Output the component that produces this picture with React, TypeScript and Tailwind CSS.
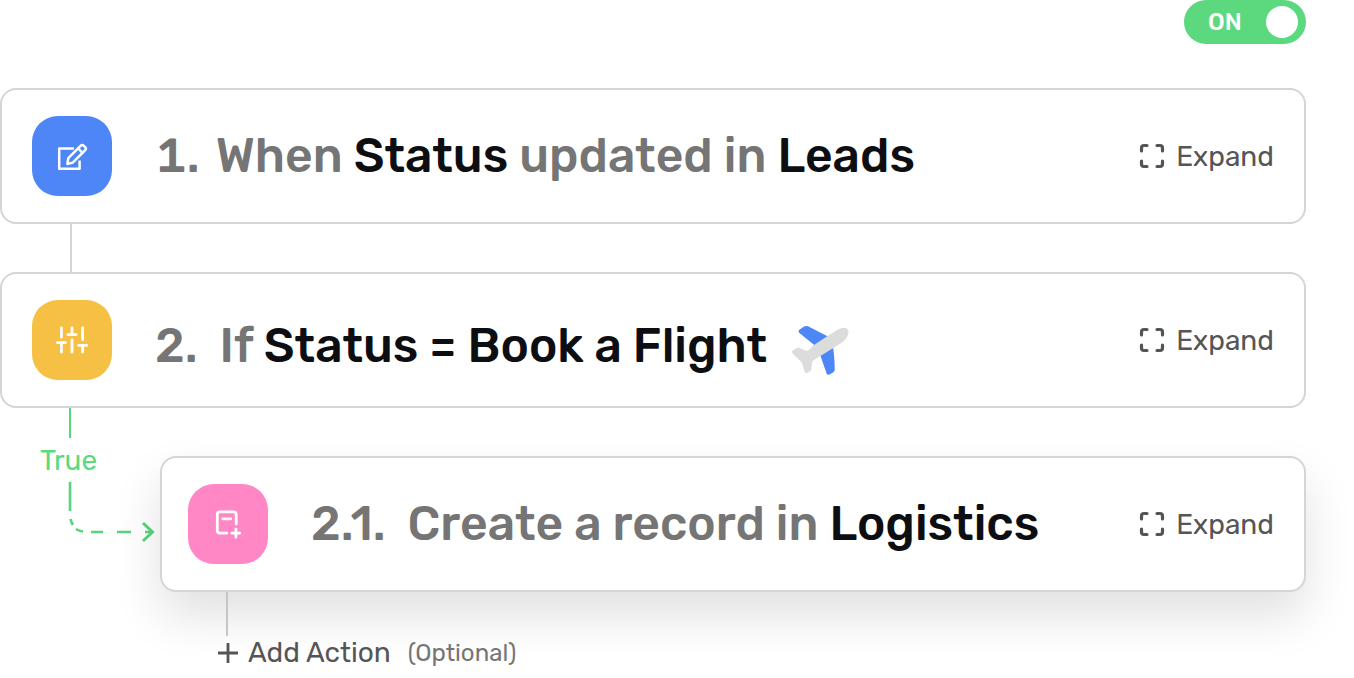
import type { ReactNode } from "react";

function EditIcon() {
  return (
    <svg viewBox="0 0 80 80" className="size-20" fill="none" stroke="white" strokeWidth="2.5" strokeLinejoin="round" strokeLinecap="round" aria-hidden="true">
      <path d="M42 32.4H27.2V52.8H47.6V44.5" strokeLinecap="butt" />
      <path d="M35.4 48L36.3 42.2L48.8 29.6Q50.1 28.3 51.6 29.6L53.2 31.2Q54.6 32.7 53.2 34.1L40.7 46.6Z" />
      <path d="M46.2 32.4L50.6 36.8" />
    </svg>
  );
}

function FilterIcon() {
  return (
    <svg viewBox="0 0 80 80" className="size-20" fill="none" stroke="white" strokeWidth="2.8" strokeLinecap="round" aria-hidden="true">
      <path d="M29.4 28V37.2M25.3 42.6H33.5M29.4 43V52M40 28V34.5M35.9 34.6H44.1M40 40V52M50.6 28V39.8M46.6 45.3H54.8M50.6 45.5V52" />
    </svg>
  );
}

function RecordIcon() {
  return (
    <svg viewBox="0 0 80 80" className="size-20" fill="none" stroke="white" strokeWidth="2.8" strokeLinecap="round" strokeLinejoin="round" aria-hidden="true">
      <path d="M48.2 40V30.5Q48.2 27.8 45.5 27.8H32Q29.3 27.8 29.3 30.5V46.5Q29.3 49.2 32 49.2H38.7M34.8 34.8H42.7M43.7 49.2H51.7M47.9 45.2V53.2" />
    </svg>
  );
}

function ExpandIcon() {
  return (
    <svg viewBox="0 0 26 26" className="size-[26px]" fill="none" stroke="#555555" strokeWidth="3.2" strokeLinecap="round" aria-hidden="true">
      <path d="M2.5 8V5Q2.5 2.5 5 2.5H8M18 2.5H21Q23.5 2.5 23.5 5V8M23.5 18V21Q23.5 23.5 21 23.5H18M8 23.5H5Q2.5 23.5 2.5 21V18" />
    </svg>
  );
}

function PlaneIcon() {
  return (
    <svg viewBox="9 8 60 56" className="h-14 w-[60px] overflow-visible" aria-hidden="true">
      <path d="M19 20L24 16.5Q26 15.4 28 16.3L48 26.5L38 38L19.4 23Q17.8 21.3 19 20ZM39.5 43L52.7 34.5Q54.8 49 54.7 59.8Q54.7 61.5 53 62.4L49.5 64.4Q47.4 65.5 46.6 63.4Z" fill="#4e86f7" />
      <path d="M12.6 40.6L16.4 38.3Q17.8 37.5 19.5 38L25.5 40.5Q28 41.4 30.2 39L32.5 36L46 27L58 19.4Q66 15.8 68.2 20Q69.8 26.2 62.5 32.2L34 50Q31.8 51.5 31.7 54L31.4 59Q31.3 60.6 29.8 61.4L27 62.8Q25.2 63.4 24.6 61.8L21.8 52.6L12.7 43.5Q11.3 41.8 12.6 40.6Z" fill="#dcdcdc" />
    </svg>
  );
}

function ConnectorArrow() {
  return (
    <svg viewBox="0 0 88 64" className="h-16 w-[88px]" fill="none" stroke="#58d47c" strokeWidth="2.6" aria-hidden="true">
      <path d="M2 0V29M2.5 37Q3 40 5 43M8 47Q11 49 15 49.5M23 50H35M49 50H63M77 50H84" />
      <path d="M75 41L84.5 50L75 59" strokeWidth="3" />
    </svg>
  );
}

type StepProps = {
  icon: ReactNode;
  color: string;
  number: string;
  card?: string;
  heading: string;
  children: ReactNode;
};

function Step({ icon, color, number, card = "pl-[30px]", heading, children }: StepProps) {
  return (
    <section className={`flex items-center rounded-2xl border-2 border-[#d5d5d5] bg-white py-[26px] pr-[30px] ${card}`}>
      <span className={`shrink-0 overflow-hidden rounded-[26px] ${color}`}>{icon}</span>
      <h2 className={`flex flex-1 items-center text-5xl font-medium whitespace-nowrap text-[#757575] ${heading}`}>
        <span className="shrink-0">{number}</span>
        {children}
      </h2>
      <button type="button" className="flex shrink-0 items-center gap-[11px] text-[28px] leading-8 text-[#555555]">
        <ExpandIcon />
        <span className="pt-0.5">Expand</span>
      </button>
    </section>
  );
}

function Strong({ children }: { children: ReactNode }) {
  return <strong className="font-medium text-[#0d0e12]">{children}</strong>;
}

export default function App() {
  return (
    <main className="min-h-screen overflow-hidden bg-white pr-12 font-['Rubik','Roboto',sans-serif]">
      <div className="flex justify-end">
        <label className="flex h-11 w-[122px] cursor-pointer items-center justify-between rounded-full bg-[#5cd97f] pr-2 pl-6 text-2xl font-medium text-white">
          ON
          <input type="checkbox" role="switch" defaultChecked className="size-8 appearance-none rounded-full bg-white" />
        </label>
      </div>

      <div className="mt-11">
        <Step icon={<EditIcon />} color="bg-[#4e86f7]" number="1." heading="pl-11 gap-4 tabular-nums">
          <span>
            When <Strong>Status</Strong> updated in <Strong>Leads</Strong>
          </span>
        </Step>
        <div className="ml-[70px] h-12 w-[2px] bg-[#d5d5d5]" />
        <Step icon={<FilterIcon />} color="bg-[#f6c044]" number="2." heading="pl-[43px] pt-3 gap-[22px]">
          <span>
            If <Strong>Status = Book a Flight</Strong>
          </span>
          <PlaneIcon />
        </Step>

        <div className="flex">
          <div className="flex w-40 shrink-0 flex-col">
            <div className="ml-[69px] h-[30px] w-[2px] bg-[#58d47c]" />
            <span className="ml-10 pt-[5px] pb-[3px] text-[28px] leading-9 text-[#5cd97f]">True</span>
            <div className="pl-[68px]">
              <ConnectorArrow />
            </div>
          </div>
          <div className="min-w-0 flex-1 pt-12">
            <Step
              icon={<RecordIcon />}
              color="bg-[#ff87c6]"
              number="2.1."
              card="pl-[26px] shadow-[0_24px_48px_rgba(0,0,0,0.12)]"
              heading="pl-[43px] gap-[22px]"
            >
              <span>
                Create a record in <Strong>Logistics</Strong>
              </span>
            </Step>
            <div className="relative ml-[66px] h-11 w-[2px] bg-[#c6c6c6]" />
            <button type="button" className="relative ml-[58px] flex items-center text-[28px] leading-[34px] text-[#555555]">
              <svg viewBox="0 0 20 20" className="mr-2.5 size-5" stroke="#555555" strokeWidth="2.8" aria-hidden="true">
                <path d="M10 0V20M0 10H20" />
              </svg>
              Add Action
              <span className="ml-[17px] text-2xl leading-8 text-[#757575]">(Optional)</span>
            </button>
          </div>
        </div>
      </div>
    </main>
  );
}
